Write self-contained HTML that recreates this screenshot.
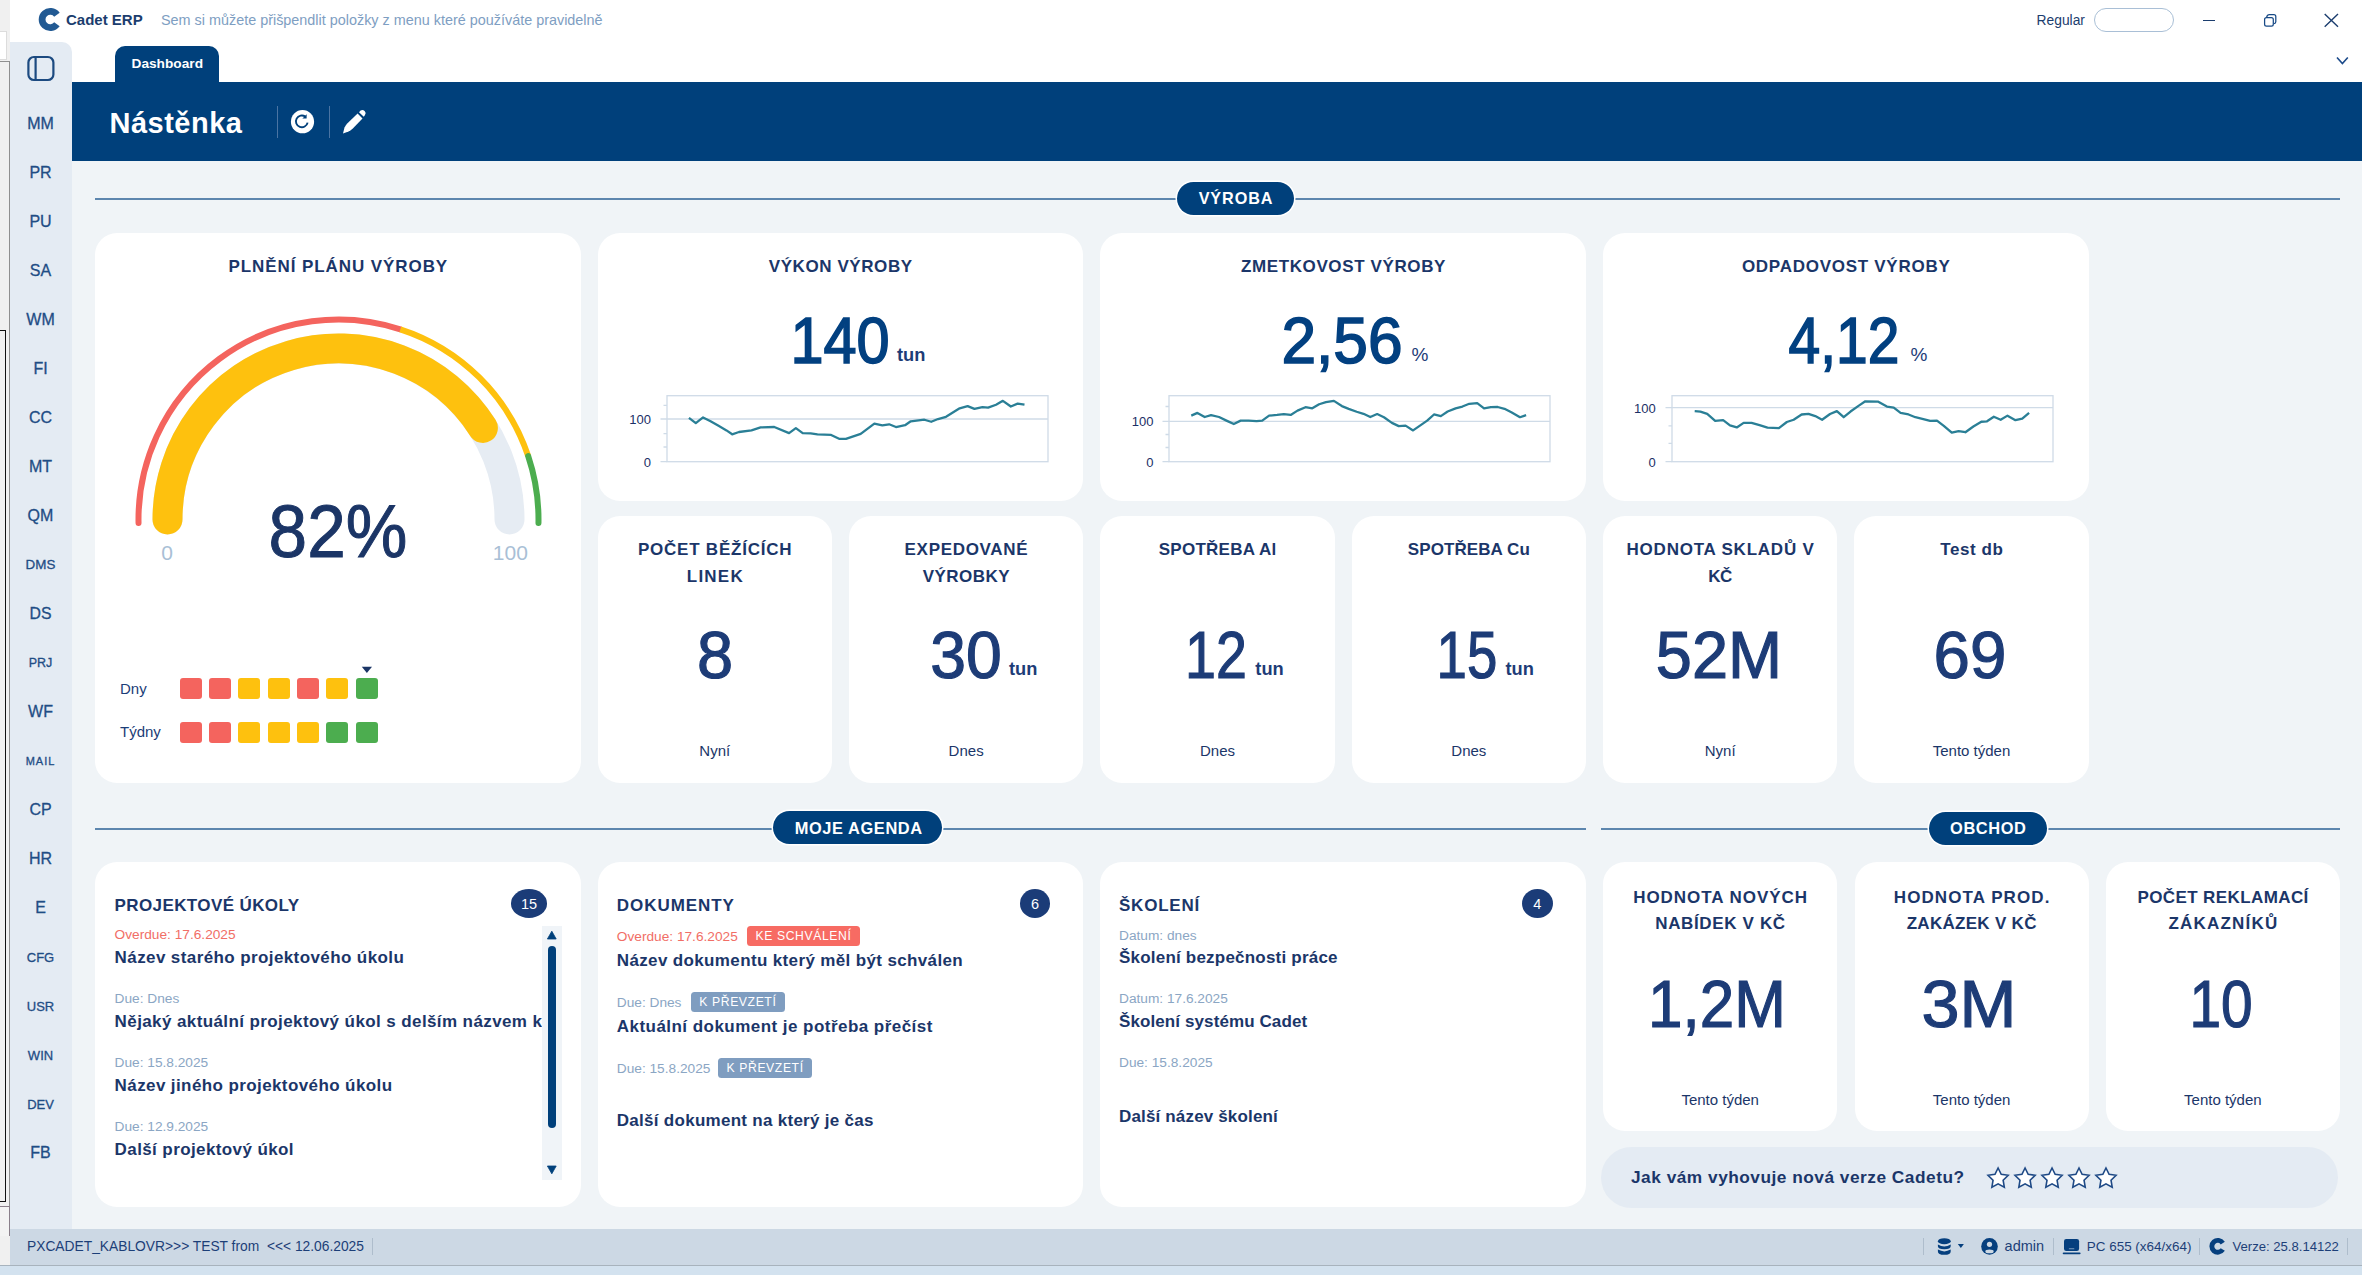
<!DOCTYPE html>
<html><head><meta charset="utf-8">
<style>
html,body{margin:0;padding:0;}
body{width:2362px;height:1275px;position:relative;overflow:hidden;font-family:"Liberation Sans",sans-serif;}
.t{position:absolute;white-space:nowrap;line-height:1;}
.r{position:absolute;}
</style></head><body>
<div class="r" style="left:0.00px;top:0.00px;width:2362.00px;height:1275.00px;background:#f0f4f7;"></div>
<div class="r" style="left:0.00px;top:0.00px;width:2362.00px;height:83.00px;background:#ffffff;"></div>
<div class="r" style="left:0.00px;top:0.00px;width:10.00px;height:1275.00px;background:#f0f0f0;"></div>
<div class="r" style="left:0.00px;top:31.00px;width:6.00px;height:27.00px;background:#ffffff;border:1px solid #dcdcdc;border-left:none;"></div>
<div class="r" style="left:0.00px;top:61.00px;width:9.00px;height:1175.00px;background:#f0f0f0;border-right:1px solid #8f8f8f;border-top:1px solid #8f8f8f;"></div>
<div class="r" style="left:0.00px;top:330.00px;width:4.50px;height:870.00px;background:transparent;border-right:1.5px solid #111;border-top:1.5px solid #111;border-bottom:1.5px solid #111;"></div>
<div class="r" style="left:0.00px;top:1206.00px;width:8.50px;height:29.00px;background:#f3f3f3;border-right:1px solid #8a7f8a;border-bottom:1px solid #8a7f8a;border-top:1px solid #8a7f8a;"></div>
<div class="r" style="left:0.00px;top:1236.00px;width:10.00px;height:30.00px;background:#f0f0f0;"></div>
<div class="r" style="left:10.00px;top:42.00px;width:61.80px;height:1187.00px;background:#e4ebf3;border-top-right-radius:10px;"></div>
<div class="r" style="left:72.00px;top:82.40px;width:2290.00px;height:78.30px;background:#00407b;"></div>
<div class="r" style="left:115.00px;top:46.00px;width:104.00px;height:40.00px;background:#00407b;border-radius:10px 10px 0 0;"></div>
<div class="t" style="left:131.50px;top:57.40px;font-size:13.7px;color:#ffffff;font-weight:700;">Dashboard</div>
<div class="t" style="left:109.50px;top:108.75px;font-size:29px;color:#ffffff;font-weight:700;letter-spacing:0.5px;">Nástěnka</div>
<div class="r" style="left:277.00px;top:106.00px;width:1.20px;height:32.00px;background:#4a74a3;"></div>
<div class="r" style="left:329.00px;top:106.00px;width:1.20px;height:32.00px;background:#4a74a3;"></div>
<svg class="r" style="left:0px;top:0px" width="70" height="40" viewBox="0 0 70 40"><path d="M56.93 14.68 A8.2 8.2 0 1 0 56.93 24.32" fill="none" stroke="#225a93" stroke-width="6.8"/></svg>
<div class="t" style="left:66.00px;top:12.30px;font-size:15px;color:#1b3d6e;font-weight:700;">Cadet ERP</div>
<div class="t" style="left:161.00px;top:12.81px;font-size:14.4px;color:#7e9ec2;font-weight:400;">Sem si můžete přišpendlit položky z menu které používáte pravidelně</div>
<div class="t" style="left:2036.60px;top:13.82px;font-size:13.8px;color:#1b3d6e;font-weight:400;">Regular</div>
<div class="r" style="left:2094.00px;top:8.00px;width:80.00px;height:24.00px;background:transparent;border:1.5px solid #a9bfd6;border-radius:13px;box-sizing:border-box;"></div>
<div class="r" style="left:2202.50px;top:20.30px;width:12.50px;height:1.20px;background:#1b3d6e;"></div>
<svg class="r" style="left:2255px;top:8px" width="30" height="24" viewBox="2255 8 30 24"><rect x="2264.6" y="17.6" width="8.7" height="8.5" rx="1.9" fill="none" stroke="#184a86" stroke-width="1.25"/><path d="M2266.6 17.3 Q2267.2 14.6 2269.4 14.6 H2273.9 Q2275.8 14.6 2275.8 16.5 V21.7 Q2275.8 23.5 2273.9 23.7" fill="none" stroke="#184a86" stroke-width="1.25"/></svg>
<svg class="r" style="left:2322px;top:12px" width="18" height="17" viewBox="0 0 18 17">
<path d="M2.7 2 L16 14.7 M16 2 L2.7 14.7" stroke="#1b3d6e" stroke-width="1.4"/>
</svg>
<svg class="r" style="left:2335px;top:55px" width="15" height="11" viewBox="0 0 15 11">
<path d="M2 2.5 L7.4 8.5 L12.8 2.5" fill="none" stroke="#1b4a8a" stroke-width="1.6"/>
</svg>
<svg class="r" style="left:289px;top:108px" width="27" height="27" viewBox="0 0 27 27">
<circle cx="13.5" cy="13.7" r="11.6" fill="#fff"/>
<path d="M18.6 14.6 A5.9 5.9 0 1 1 16.3 8.6" fill="none" stroke="#00407b" stroke-width="1.9"/>
<path d="M17.7 6.2 L17.6 10.6 L13.4 10.4 Z" fill="#00407b"/>
</svg>
<svg class="r" style="left:340px;top:108px" width="28" height="28" viewBox="0 0 28 28">
<path d="M3 25.5 L4.5 19.5 Q5.5 17.2 7.5 15.2 L17.6 5.6 L22.5 10.5 L12.8 20.4 Q10.8 22.4 8.5 23.6 Z" fill="#fff"/>
<path d="M19 4.2 L20.6 2.6 Q22.6 1 24.6 3 Q26.6 5 25 7 L23.8 8.7 Z" fill="#fff"/>
</svg>
<svg class="r" style="left:26px;top:55px" width="29" height="27" viewBox="0 0 29 27">
<rect x="2.4" y="2" width="25" height="23" rx="5.5" fill="none" stroke="#1c4a80" stroke-width="2.2"/>
<path d="M9.6 2 V25" stroke="#1c4a80" stroke-width="2.2"/>
</svg>
<div class="t" style="left:10.50px;width:60px;text-align:center;top:115.96px;font-size:16px;color:#1f4d85;font-weight:400;-webkit-text-stroke:0.3px #1f4d85;">MM</div>
<div class="t" style="left:10.50px;width:60px;text-align:center;top:164.96px;font-size:16px;color:#1f4d85;font-weight:400;-webkit-text-stroke:0.3px #1f4d85;">PR</div>
<div class="t" style="left:10.50px;width:60px;text-align:center;top:213.96px;font-size:16px;color:#1f4d85;font-weight:400;-webkit-text-stroke:0.3px #1f4d85;">PU</div>
<div class="t" style="left:10.50px;width:60px;text-align:center;top:262.96px;font-size:16px;color:#1f4d85;font-weight:400;-webkit-text-stroke:0.3px #1f4d85;">SA</div>
<div class="t" style="left:10.50px;width:60px;text-align:center;top:311.96px;font-size:16px;color:#1f4d85;font-weight:400;-webkit-text-stroke:0.3px #1f4d85;">WM</div>
<div class="t" style="left:10.50px;width:60px;text-align:center;top:360.96px;font-size:16px;color:#1f4d85;font-weight:400;-webkit-text-stroke:0.3px #1f4d85;">FI</div>
<div class="t" style="left:10.50px;width:60px;text-align:center;top:409.96px;font-size:16px;color:#1f4d85;font-weight:400;-webkit-text-stroke:0.3px #1f4d85;">CC</div>
<div class="t" style="left:10.50px;width:60px;text-align:center;top:458.96px;font-size:16px;color:#1f4d85;font-weight:400;-webkit-text-stroke:0.3px #1f4d85;">MT</div>
<div class="t" style="left:10.50px;width:60px;text-align:center;top:507.96px;font-size:16px;color:#1f4d85;font-weight:400;-webkit-text-stroke:0.3px #1f4d85;">QM</div>
<div class="t" style="left:10.50px;width:60px;text-align:center;top:558.16px;font-size:13.4px;color:#1f4d85;font-weight:400;-webkit-text-stroke:0.3px #1f4d85;">DMS</div>
<div class="t" style="left:10.50px;width:60px;text-align:center;top:606.13px;font-size:15.8px;color:#1f4d85;font-weight:400;-webkit-text-stroke:0.3px #1f4d85;">DS</div>
<div class="t" style="left:10.50px;width:60px;text-align:center;top:656.92px;font-size:12.5px;color:#1f4d85;font-weight:400;-webkit-text-stroke:0.3px #1f4d85;">PRJ</div>
<div class="t" style="left:10.50px;width:60px;text-align:center;top:703.96px;font-size:16px;color:#1f4d85;font-weight:400;-webkit-text-stroke:0.3px #1f4d85;">WF</div>
<div class="t" style="left:10.50px;width:60px;text-align:center;top:756.19px;font-size:11px;color:#1f4d85;font-weight:400;letter-spacing:1px;-webkit-text-stroke:0.3px #1f4d85;">MAIL</div>
<div class="t" style="left:10.50px;width:60px;text-align:center;top:801.96px;font-size:16px;color:#1f4d85;font-weight:400;-webkit-text-stroke:0.3px #1f4d85;">CP</div>
<div class="t" style="left:10.50px;width:60px;text-align:center;top:850.96px;font-size:16px;color:#1f4d85;font-weight:400;-webkit-text-stroke:0.3px #1f4d85;">HR</div>
<div class="t" style="left:10.50px;width:60px;text-align:center;top:899.96px;font-size:16px;color:#1f4d85;font-weight:400;-webkit-text-stroke:0.3px #1f4d85;">E</div>
<div class="t" style="left:10.50px;width:60px;text-align:center;top:950.50px;font-size:13px;color:#1f4d85;font-weight:400;-webkit-text-stroke:0.3px #1f4d85;">CFG</div>
<div class="t" style="left:10.50px;width:60px;text-align:center;top:999.50px;font-size:13px;color:#1f4d85;font-weight:400;-webkit-text-stroke:0.3px #1f4d85;">USR</div>
<div class="t" style="left:10.50px;width:60px;text-align:center;top:1048.50px;font-size:13px;color:#1f4d85;font-weight:400;-webkit-text-stroke:0.3px #1f4d85;">WIN</div>
<div class="t" style="left:10.50px;width:60px;text-align:center;top:1097.50px;font-size:13px;color:#1f4d85;font-weight:400;-webkit-text-stroke:0.3px #1f4d85;">DEV</div>
<div class="t" style="left:10.50px;width:60px;text-align:center;top:1144.96px;font-size:16px;color:#1f4d85;font-weight:400;-webkit-text-stroke:0.3px #1f4d85;">FB</div>
<div class="r" style="left:95.00px;top:197.80px;width:2245.00px;height:2.20px;background:#5d86ae;"></div>
<div class="r" style="left:1177.10px;top:181.70px;width:116.60px;height:33.10px;background:#00407b;border-radius:17px;box-shadow:0 0 0 1.5px #fff;"></div>
<div class="t" style="left:1178.00px;width:116px;text-align:center;top:190.19px;font-size:16.2px;color:#fff;font-weight:700;letter-spacing:0.9px;">VÝROBA</div>
<div class="r" style="left:95.00px;top:827.80px;width:1491.00px;height:2.20px;background:#5d86ae;"></div>
<div class="r" style="left:773.10px;top:811.40px;width:168.90px;height:33.10px;background:#00407b;border-radius:17px;box-shadow:0 0 0 1.5px #fff;"></div>
<div class="t" style="left:774.70px;width:168px;text-align:center;top:820.22px;font-size:16.4px;color:#fff;font-weight:700;letter-spacing:0.6px;">MOJE AGENDA</div>
<div class="r" style="left:1601.40px;top:827.80px;width:738.60px;height:2.20px;background:#5d86ae;"></div>
<div class="r" style="left:1928.60px;top:811.50px;width:118.60px;height:33.00px;background:#00407b;border-radius:17px;box-shadow:0 0 0 1.5px #fff;"></div>
<div class="t" style="left:1929.30px;width:118px;text-align:center;top:820.22px;font-size:16.4px;color:#fff;font-weight:700;letter-spacing:0.6px;">OBCHOD</div>
<div class="r" style="left:95.00px;top:233.00px;width:485.50px;height:550.40px;background:#fff;border-radius:22px;"></div>
<div class="r" style="left:597.70px;top:233.00px;width:485.50px;height:268.00px;background:#fff;border-radius:22px;"></div>
<div class="r" style="left:1100.40px;top:233.00px;width:485.50px;height:268.00px;background:#fff;border-radius:22px;"></div>
<div class="r" style="left:1603.10px;top:233.00px;width:485.50px;height:268.00px;background:#fff;border-radius:22px;"></div>
<div class="r" style="left:597.70px;top:516.30px;width:234.15px;height:267.20px;background:#fff;border-radius:22px;"></div>
<div class="r" style="left:849.05px;top:516.30px;width:234.15px;height:267.20px;background:#fff;border-radius:22px;"></div>
<div class="r" style="left:1100.40px;top:516.30px;width:234.15px;height:267.20px;background:#fff;border-radius:22px;"></div>
<div class="r" style="left:1351.75px;top:516.30px;width:234.15px;height:267.20px;background:#fff;border-radius:22px;"></div>
<div class="r" style="left:1603.10px;top:516.30px;width:234.15px;height:267.20px;background:#fff;border-radius:22px;"></div>
<div class="r" style="left:1854.45px;top:516.30px;width:234.15px;height:267.20px;background:#fff;border-radius:22px;"></div>
<div class="r" style="left:95.00px;top:862.30px;width:485.50px;height:344.60px;background:#fff;border-radius:22px;"></div>
<div class="r" style="left:597.70px;top:862.30px;width:485.50px;height:344.60px;background:#fff;border-radius:22px;"></div>
<div class="r" style="left:1100.40px;top:862.30px;width:485.50px;height:344.60px;background:#fff;border-radius:22px;"></div>
<div class="r" style="left:1603.10px;top:862.30px;width:234.15px;height:268.60px;background:#fff;border-radius:22px;"></div>
<div class="r" style="left:1854.50px;top:862.30px;width:234.15px;height:268.60px;background:#fff;border-radius:22px;"></div>
<div class="r" style="left:2105.80px;top:862.30px;width:234.15px;height:268.60px;background:#fff;border-radius:22px;"></div>
<div class="r" style="left:1601.40px;top:1146.60px;width:736.60px;height:61.00px;background:#e4ebf3;border-radius:31px;"></div>
<div class="r" style="left:10.00px;top:1229.00px;width:2352.00px;height:35.50px;background:#ccd8e4;"></div>
<div class="r" style="left:0.00px;top:1264.50px;width:2362.00px;height:1.30px;background:#a8b3bd;"></div>
<div class="r" style="left:0.00px;top:1265.80px;width:2362.00px;height:10.00px;background:#d3e2ef;"></div>
<div class="t" style="left:138.31px;width:400px;text-align:center;top:257.81px;font-size:17px;color:#1b3669;font-weight:700;letter-spacing:0.92px;">PLNĚNÍ PLÁNU VÝROBY</div>
<svg class="r" style="left:100px;top:300px" width="480" height="260" viewBox="100 300 480 260"><path d="M167.50 519.50 A171 171 0 0 1 509.50 519.50" fill="none" stroke="#e6ecf3" stroke-width="30" stroke-linecap="round"/><path d="M167.50 519.50 A171 171 0 0 1 482.88 427.87" fill="none" stroke="#fec10e" stroke-width="30" stroke-linecap="round"/><path d="M138.53 522.99 A200 200 0 0 1 400.30 329.29" fill="none" stroke="#f4645e" stroke-width="6" stroke-linecap="round"/><path d="M400.30 329.29 A200 200 0 0 1 528.16 456.04" fill="none" stroke="#fec10e" stroke-width="6"/><path d="M528.16 456.04 A200 200 0 0 1 538.47 522.99" fill="none" stroke="#4cad4f" stroke-width="6" stroke-linecap="round"/></svg>
<div class="t" style="left:147.00px;width:40px;text-align:center;top:542.02px;font-size:21px;color:#a9bfd6;font-weight:400;">0</div>
<div class="t" style="left:480.40px;width:60px;text-align:center;top:542.02px;font-size:21px;color:#a9bfd6;font-weight:400;">100</div>
<div class="t" style="left:137.90px;width:400px;text-align:center;top:494.11px;font-size:75px;color:#1b3566;font-weight:400;transform:scaleX(0.9242999999999999);-webkit-text-stroke:1.0px #1b3566;">82%</div>
<div class="t" style="left:120.00px;top:680.60px;font-size:15px;color:#1b3d78;font-weight:400;">Dny</div>
<div class="t" style="left:120.00px;top:723.80px;font-size:15px;color:#1b3d78;font-weight:400;">Týdny</div>
<div class="r" style="left:179.60px;top:677.50px;width:22.00px;height:21.50px;background:#f4645e;border-radius:3px;"></div>
<div class="r" style="left:208.95px;top:677.50px;width:22.00px;height:21.50px;background:#f4645e;border-radius:3px;"></div>
<div class="r" style="left:238.30px;top:677.50px;width:22.00px;height:21.50px;background:#fec10e;border-radius:3px;"></div>
<div class="r" style="left:267.65px;top:677.50px;width:22.00px;height:21.50px;background:#fec10e;border-radius:3px;"></div>
<div class="r" style="left:297.00px;top:677.50px;width:22.00px;height:21.50px;background:#f4645e;border-radius:3px;"></div>
<div class="r" style="left:326.35px;top:677.50px;width:22.00px;height:21.50px;background:#fec10e;border-radius:3px;"></div>
<div class="r" style="left:355.70px;top:677.50px;width:22.00px;height:21.50px;background:#4cad4f;border-radius:3px;"></div>
<div class="r" style="left:179.60px;top:721.70px;width:22.00px;height:21.80px;background:#f4645e;border-radius:3px;"></div>
<div class="r" style="left:208.95px;top:721.70px;width:22.00px;height:21.80px;background:#f4645e;border-radius:3px;"></div>
<div class="r" style="left:238.30px;top:721.70px;width:22.00px;height:21.80px;background:#fec10e;border-radius:3px;"></div>
<div class="r" style="left:267.65px;top:721.70px;width:22.00px;height:21.80px;background:#fec10e;border-radius:3px;"></div>
<div class="r" style="left:297.00px;top:721.70px;width:22.00px;height:21.80px;background:#fec10e;border-radius:3px;"></div>
<div class="r" style="left:326.35px;top:721.70px;width:22.00px;height:21.80px;background:#4cad4f;border-radius:3px;"></div>
<div class="r" style="left:355.70px;top:721.70px;width:22.00px;height:21.80px;background:#4cad4f;border-radius:3px;"></div>
<svg class="r" style="left:360px;top:665px" width="14" height="10" viewBox="0 0 14 10"><path d="M1.8 1.8 H12 L6.9 8 Z" fill="#1b3566"/></svg>
<div class="t" style="left:640.74px;width:400px;text-align:center;top:258.41px;font-size:17px;color:#1b3669;font-weight:700;letter-spacing:0.58px;">VÝKON VÝROBY</div>
<div class="t" style="left:640.00px;width:400px;text-align:center;top:307.97px;font-size:65.6px;color:#024080;font-weight:400;transform:scaleX(0.90644);-webkit-text-stroke:1.6px #024080;">140</div>
<div class="t" style="left:897.00px;top:345.51px;font-size:18.3px;color:#1d3c77;font-weight:700;">tun</div>
<div class="t" style="left:1143.46px;width:400px;text-align:center;top:258.41px;font-size:17px;color:#1b3669;font-weight:700;letter-spacing:0.62px;">ZMETKOVOST VÝROBY</div>
<div class="t" style="left:1142.30px;width:400px;text-align:center;top:307.97px;font-size:65.6px;color:#024080;font-weight:400;transform:scaleX(0.9494400000000001);-webkit-text-stroke:1.6px #024080;">2,56</div>
<div class="t" style="left:1411.60px;top:344.92px;font-size:19px;color:#1d3c77;font-weight:400;">%</div>
<div class="t" style="left:1646.21px;width:400px;text-align:center;top:258.41px;font-size:17px;color:#1b3669;font-weight:700;letter-spacing:0.73px;">ODPADOVOST VÝROBY</div>
<div class="t" style="left:1643.80px;width:400px;text-align:center;top:307.97px;font-size:65.6px;color:#024080;font-weight:400;transform:scaleX(0.8677199999999999);-webkit-text-stroke:1.6px #024080;">4,12</div>
<div class="t" style="left:1910.50px;top:344.92px;font-size:19px;color:#1d3c77;font-weight:400;">%</div>
<svg class="r" style="left:617px;top:380px" width="441" height="100" viewBox="617 380 441 100"><rect x="667" y="395.7" width="381" height="66" fill="none" stroke="#cfdbe7" stroke-width="1.3"/><path d="M660.5 419.0 H1048 M660.5 461.7 H667 M663.5 405.3 H667 M663.5 433.7 H667 M663.5 447.0 H667" stroke="#cfdbe7" stroke-width="1.3"/><path d="M688.95 417.91 L695.78 423.14 L703.06 417.45 L710.56 421.32 L718.53 425.87 L726.49 430.42 L732.17 434.29 L739.00 432.01 L751.51 430.42 L760.61 427.46 L774.26 427.01 L789.04 433.15 L795.87 428.14 L802.69 433.15 L810.66 433.38 L817.48 434.29 L831.13 434.97 L839.09 438.84 L845.91 438.84 L860.70 433.83 L874.35 423.59 L882.31 425.41 L889.14 424.28 L895.96 427.01 L905.06 425.19 L910.75 421.32 L924.39 419.73 L931.22 421.77 L938.04 419.04 L946.01 416.77 L959.65 408.35 L967.62 406.08 L974.44 408.81 L982.40 407.22 L988.09 407.67 L996.05 404.71 L1002.88 400.85 L1010.84 406.53 L1017.66 403.58 L1024.49 404.71" fill="none" stroke="#2a7f96" stroke-width="2.3" stroke-linejoin="round"/></svg>
<div class="t" style="left:611.00px;width:40px;text-align:right;top:412.80px;font-size:13px;color:#1b2f66;font-weight:400;">100</div>
<div class="t" style="left:611.00px;width:40px;text-align:right;top:455.80px;font-size:13px;color:#1b2f66;font-weight:400;">0</div>
<svg class="r" style="left:1119.4px;top:380px" width="441.0" height="100" viewBox="1119.4 380 441.0 100"><rect x="1169.4" y="395.7" width="381.0" height="66" fill="none" stroke="#cfdbe7" stroke-width="1.3"/><path d="M1162.9 421.3 H1550.4 M1162.9 461.7 H1169.4 M1165.9 406.5 H1169.4 M1165.9 434.5 H1169.4 M1165.9 447.5 H1169.4" stroke="#cfdbe7" stroke-width="1.3"/><path d="M1191.67 415.63 L1197.82 412.90 L1205.10 417.00 L1211.46 415.18 L1219.43 417.00 L1227.39 420.86 L1234.21 424.05 L1241.04 420.64 L1249.00 420.64 L1256.96 421.09 L1262.65 420.64 L1269.47 415.63 L1277.43 414.95 L1284.26 414.04 L1291.08 414.95 L1297.91 410.63 L1305.87 407.22 L1312.69 408.35 L1319.52 404.26 L1326.34 402.21 L1334.30 400.85 L1342.27 406.08 L1349.09 408.81 L1357.05 411.77 L1363.88 413.81 L1370.70 417.00 L1377.53 414.04 L1384.35 417.22 L1392.31 422.91 L1399.14 426.10 L1405.96 425.64 L1413.47 430.42 L1420.75 425.41 L1427.57 420.64 L1434.39 414.49 L1441.22 416.09 L1448.04 411.54 L1456.01 408.35 L1462.83 406.53 L1469.65 403.80 L1477.62 403.12 L1484.44 408.35 L1491.26 407.22 L1498.09 406.99 L1504.91 408.81 L1511.74 412.22 L1520.38 417.22 L1526.52 415.18" fill="none" stroke="#2a7f96" stroke-width="2.3" stroke-linejoin="round"/></svg>
<div class="t" style="left:1113.40px;width:40px;text-align:right;top:415.10px;font-size:13px;color:#1b2f66;font-weight:400;">100</div>
<div class="t" style="left:1113.40px;width:40px;text-align:right;top:455.80px;font-size:13px;color:#1b2f66;font-weight:400;">0</div>
<svg class="r" style="left:1621.7px;top:380px" width="440.9999999999998" height="100" viewBox="1621.7 380 440.9999999999998 100"><rect x="1671.7" y="395.7" width="380.9999999999998" height="66" fill="none" stroke="#cfdbe7" stroke-width="1.3"/><path d="M1665.2 407.7 H2052.7 M1665.2 461.7 H1671.7 M1668.2 425.9 H1671.7 M1668.2 443.4 H1671.7" stroke="#cfdbe7" stroke-width="1.3"/><path d="M1694.40 411.08 L1700.09 411.54 L1706.92 413.81 L1714.88 420.86 L1722.84 420.18 L1729.66 425.41 L1736.49 427.46 L1743.31 422.91 L1751.27 422.91 L1759.24 425.19 L1767.20 427.69 L1778.57 428.14 L1786.53 422.00 L1793.36 419.73 L1801.32 414.49 L1808.14 413.81 L1814.97 416.09 L1821.79 419.73 L1829.75 414.04 L1836.58 411.08 L1843.40 417.22 L1850.23 411.54 L1858.19 405.85 L1865.01 401.30 L1877.53 401.53 L1886.62 406.53 L1893.45 407.67 L1900.27 412.90 L1908.23 414.49 L1915.06 417.22 L1923.02 419.04 L1929.85 420.86 L1936.67 420.64 L1943.49 425.87 L1951.46 432.69 L1958.28 431.10 L1965.10 432.24 L1973.07 426.55 L1981.03 421.77 L1986.72 421.32 L1993.54 416.77 L2000.36 419.73 L2007.19 415.63 L2015.15 420.18 L2021.97 418.59 L2028.80 412.90" fill="none" stroke="#2a7f96" stroke-width="2.3" stroke-linejoin="round"/></svg>
<div class="t" style="left:1615.70px;width:40px;text-align:right;top:401.50px;font-size:13px;color:#1b2f66;font-weight:400;">100</div>
<div class="t" style="left:1615.70px;width:40px;text-align:right;top:455.80px;font-size:13px;color:#1b2f66;font-weight:400;">0</div>
<div class="t" style="left:515.17px;width:400px;text-align:center;top:541.41px;font-size:17px;color:#1b3669;font-weight:700;letter-spacing:0.78px;">POČET BĚŽÍCÍCH</div>
<div class="t" style="left:515.39px;width:400px;text-align:center;top:568.21px;font-size:17px;color:#1b3669;font-weight:700;letter-spacing:1.22px;">LINEK</div>
<div class="t" style="left:514.80px;width:400px;text-align:center;top:621.79px;font-size:66.4px;color:#1d3c77;font-weight:400;transform:scaleX(0.9784999999999999);-webkit-text-stroke:1.2px #1d3c77;">8</div>
<div class="t" style="left:614.78px;width:200px;text-align:center;top:743.30px;font-size:15px;color:#1b3669;font-weight:400;">Nyní</div>
<div class="t" style="left:766.47px;width:400px;text-align:center;top:541.41px;font-size:17px;color:#1b3669;font-weight:700;letter-spacing:0.69px;">EXPEDOVANÉ</div>
<div class="t" style="left:766.35px;width:400px;text-align:center;top:568.21px;font-size:17px;color:#1b3669;font-weight:700;letter-spacing:0.45px;">VÝROBKY</div>
<div class="t" style="left:766.00px;width:400px;text-align:center;top:621.79px;font-size:66.4px;color:#1d3c77;font-weight:400;transform:scaleX(0.9684);-webkit-text-stroke:1.2px #1d3c77;">30</div>
<div class="t" style="left:1009.00px;top:660.01px;font-size:18.3px;color:#1d3c77;font-weight:700;">tun</div>
<div class="t" style="left:866.13px;width:200px;text-align:center;top:743.30px;font-size:15px;color:#1b3669;font-weight:400;">Dnes</div>
<div class="t" style="left:1017.61px;width:400px;text-align:center;top:541.41px;font-size:17px;color:#1b3669;font-weight:700;letter-spacing:0.26px;">SPOTŘEBA Al</div>
<div class="t" style="left:1015.50px;width:400px;text-align:center;top:621.79px;font-size:66.4px;color:#1d3c77;font-weight:400;transform:scaleX(0.8376);-webkit-text-stroke:1.2px #1d3c77;">12</div>
<div class="t" style="left:1255.30px;top:660.01px;font-size:18.3px;color:#1d3c77;font-weight:700;">tun</div>
<div class="t" style="left:1117.48px;width:200px;text-align:center;top:743.30px;font-size:15px;color:#1b3669;font-weight:400;">Dnes</div>
<div class="t" style="left:1268.86px;width:400px;text-align:center;top:541.41px;font-size:17px;color:#1b3669;font-weight:700;letter-spacing:0.07px;">SPOTŘEBA Cu</div>
<div class="t" style="left:1266.50px;width:400px;text-align:center;top:621.79px;font-size:66.4px;color:#1d3c77;font-weight:400;transform:scaleX(0.8224);-webkit-text-stroke:1.2px #1d3c77;">15</div>
<div class="t" style="left:1505.40px;top:660.01px;font-size:18.3px;color:#1d3c77;font-weight:700;">tun</div>
<div class="t" style="left:1368.83px;width:200px;text-align:center;top:743.30px;font-size:15px;color:#1b3669;font-weight:400;">Dnes</div>
<div class="t" style="left:1520.56px;width:400px;text-align:center;top:541.41px;font-size:17px;color:#1b3669;font-weight:700;letter-spacing:0.77px;">HODNOTA SKLADŮ V</div>
<div class="t" style="left:1519.92px;width:400px;text-align:center;top:568.21px;font-size:17px;color:#1b3669;font-weight:700;letter-spacing:-0.5px;">KČ</div>
<div class="t" style="left:1519.40px;width:400px;text-align:center;top:621.79px;font-size:66.4px;color:#1d3c77;font-weight:400;transform:scaleX(0.97801);-webkit-text-stroke:1.2px #1d3c77;">52M</div>
<div class="t" style="left:1620.17px;width:200px;text-align:center;top:743.30px;font-size:15px;color:#1b3669;font-weight:400;">Nyní</div>
<div class="t" style="left:1771.81px;width:400px;text-align:center;top:541.41px;font-size:17px;color:#1b3669;font-weight:700;letter-spacing:0.57px;">Test db</div>
<div class="t" style="left:1770.00px;width:400px;text-align:center;top:621.79px;font-size:66.4px;color:#1d3c77;font-weight:400;transform:scaleX(0.98532);-webkit-text-stroke:1.2px #1d3c77;">69</div>
<div class="t" style="left:1871.53px;width:200px;text-align:center;top:743.30px;font-size:15px;color:#1b3669;font-weight:400;">Tento týden</div>
<div class="t" style="left:114.60px;top:897.11px;font-size:17px;color:#1b3669;font-weight:700;letter-spacing:0.39px;">PROJEKTOVÉ ÚKOLY</div>
<div class="r" style="left:510.70px;top:888.80px;width:36.70px;height:28.80px;background:#1b3c78;border-radius:50%;"></div>
<div class="t" style="left:509.05px;width:40px;text-align:center;top:896.53px;font-size:14.5px;color:#fff;font-weight:400;">15</div>
<div class="r" style="left:100px;top:920px;width:441.8px;height:260px;overflow:hidden;">
<div class="t" style="left:14.6px;top:8.40px;font-size:13.7px;color:#f16e66;">Overdue: 17.6.2025</div>
<div class="t" style="left:14.6px;top:29.41px;font-size:17px;color:#1b3669;font-weight:700;letter-spacing:0.4px;">Název starého projektového úkolu</div>
<div class="t" style="left:14.6px;top:72.10px;font-size:13.7px;color:#8ba6c4;">Due: Dnes</div>
<div class="t" style="left:14.6px;top:93.11px;font-size:17px;color:#1b3669;font-weight:700;letter-spacing:0.4px;">Nějaký aktuální projektový úkol s delším názvem k</div>
<div class="t" style="left:14.6px;top:135.80px;font-size:13.7px;color:#8ba6c4;">Due: 15.8.2025</div>
<div class="t" style="left:14.6px;top:156.81px;font-size:17px;color:#1b3669;font-weight:700;letter-spacing:0.4px;">Název jiného projektového úkolu</div>
<div class="t" style="left:14.6px;top:199.50px;font-size:13.7px;color:#8ba6c4;">Due: 12.9.2025</div>
<div class="t" style="left:14.6px;top:220.51px;font-size:17px;color:#1b3669;font-weight:700;letter-spacing:0.4px;">Další projektový úkol</div>
</div>
<div class="r" style="left:541.80px;top:925.80px;width:20.30px;height:254.20px;background:#f0f4f8;"></div>
<div class="r" style="left:547.70px;top:946.20px;width:8.50px;height:181.50px;background:#00407b;border-radius:4.3px;"></div>
<svg class="r" style="left:544px;top:928px" width="16" height="14" viewBox="0 0 16 14"><path d="M7.8 3.2 L12.2 11 H3.4 Z" fill="#00407b" stroke="#00407b" stroke-width="0.8" stroke-linejoin="round"/></svg>
<svg class="r" style="left:544px;top:1163px" width="16" height="14" viewBox="0 0 16 14"><path d="M3.4 3 H12.2 L7.8 10.8 Z" fill="#00407b" stroke="#00407b" stroke-width="0.8" stroke-linejoin="round"/></svg>
<div class="t" style="left:616.80px;top:897.11px;font-size:17px;color:#1b3669;font-weight:700;letter-spacing:0.95px;">DOKUMENTY</div>
<div class="r" style="left:1019.80px;top:889.00px;width:30.50px;height:29.00px;background:#1b3c78;border-radius:50%;"></div>
<div class="t" style="left:1015.05px;width:40px;text-align:center;top:896.83px;font-size:14.5px;color:#fff;font-weight:400;">6</div>
<div class="t" style="left:616.80px;top:930.30px;font-size:13.7px;color:#f16e66;font-weight:400;">Overdue: 17.6.2025</div>
<div class="r" style="left:747.30px;top:925.80px;width:112.40px;height:20.30px;background:#f76b63;border-radius:3.5px;"></div>
<div class="t" style="left:733.50px;width:140px;text-align:center;top:930.27px;font-size:12.2px;color:#fff;font-weight:400;letter-spacing:0.6px;">KE SCHVÁLENÍ</div>
<div class="t" style="left:616.80px;top:952.21px;font-size:17px;color:#1b3669;font-weight:700;letter-spacing:0.36px;">Název dokumentu který měl být schválen</div>
<div class="t" style="left:616.80px;top:996.10px;font-size:13.7px;color:#8ba6c4;font-weight:400;">Due: Dnes</div>
<div class="r" style="left:690.80px;top:991.90px;width:94.10px;height:20.60px;background:#7f9dc0;border-radius:3.5px;"></div>
<div class="t" style="left:667.85px;width:140px;text-align:center;top:995.97px;font-size:12.2px;color:#fff;font-weight:400;letter-spacing:0.6px;">K PŘEVZETÍ</div>
<div class="t" style="left:616.80px;top:1018.01px;font-size:17px;color:#1b3669;font-weight:700;letter-spacing:0.46px;">Aktuální dokument je potřeba přečíst</div>
<div class="t" style="left:616.80px;top:1062.20px;font-size:13.7px;color:#8ba6c4;font-weight:400;">Due: 15.8.2025</div>
<div class="r" style="left:717.90px;top:1058.20px;width:94.40px;height:20.10px;background:#7f9dc0;border-radius:3.5px;"></div>
<div class="t" style="left:695.10px;width:140px;text-align:center;top:1062.27px;font-size:12.2px;color:#fff;font-weight:400;letter-spacing:0.6px;">K PŘEVZETÍ</div>
<div class="t" style="left:616.80px;top:1112.01px;font-size:17px;color:#1b3669;font-weight:700;letter-spacing:0.28px;">Další dokument na který je čas</div>
<div class="t" style="left:1119.00px;top:897.11px;font-size:17px;color:#1b3669;font-weight:700;letter-spacing:0.77px;">ŠKOLENÍ</div>
<div class="r" style="left:1522.00px;top:889.00px;width:30.60px;height:29.00px;background:#1b3c78;border-radius:50%;"></div>
<div class="t" style="left:1517.30px;width:40px;text-align:center;top:896.83px;font-size:14.5px;color:#fff;font-weight:400;">4</div>
<div class="t" style="left:1119.00px;top:928.90px;font-size:13.7px;color:#8ba6c4;font-weight:400;">Datum: dnes</div>
<div class="t" style="left:1119.00px;top:949.31px;font-size:17px;color:#1b3669;font-weight:700;letter-spacing:0.21px;">Školení bezpečnosti práce</div>
<div class="t" style="left:1119.00px;top:992.40px;font-size:13.7px;color:#8ba6c4;font-weight:400;">Datum: 17.6.2025</div>
<div class="t" style="left:1119.00px;top:1012.91px;font-size:17px;color:#1b3669;font-weight:700;letter-spacing:0.1px;">Školení systému Cadet</div>
<div class="t" style="left:1119.00px;top:1056.00px;font-size:13.7px;color:#8ba6c4;font-weight:400;">Due: 15.8.2025</div>
<div class="t" style="left:1119.00px;top:1107.71px;font-size:17px;color:#1b3669;font-weight:700;letter-spacing:0.16px;">Další název školení</div>
<div class="t" style="left:1520.65px;width:400px;text-align:center;top:888.61px;font-size:17px;color:#1b3669;font-weight:700;letter-spacing:0.96px;">HODNOTA NOVÝCH</div>
<div class="t" style="left:1520.50px;width:400px;text-align:center;top:915.21px;font-size:17px;color:#1b3669;font-weight:700;letter-spacing:0.65px;">NABÍDEK V KČ</div>
<div class="t" style="left:1517.30px;width:400px;text-align:center;top:971.09px;font-size:66.4px;color:#1d3c77;font-weight:400;transform:scaleX(0.933844);-webkit-text-stroke:1.2px #1d3c77;">1,2M</div>
<div class="t" style="left:1620.17px;width:200px;text-align:center;top:1092.00px;font-size:15px;color:#1b3669;font-weight:400;">Tento týden</div>
<div class="t" style="left:1772.12px;width:400px;text-align:center;top:888.61px;font-size:17px;color:#1b3669;font-weight:700;letter-spacing:1.08px;">HODNOTA PROD.</div>
<div class="t" style="left:1771.72px;width:400px;text-align:center;top:915.21px;font-size:17px;color:#1b3669;font-weight:700;letter-spacing:0.29px;">ZAKÁZEK V KČ</div>
<div class="t" style="left:1769.20px;width:400px;text-align:center;top:971.09px;font-size:66.4px;color:#1d3c77;font-weight:400;transform:scaleX(1.029655);-webkit-text-stroke:1.2px #1d3c77;">3M</div>
<div class="t" style="left:1871.58px;width:200px;text-align:center;top:1092.00px;font-size:15px;color:#1b3669;font-weight:400;">Tento týden</div>
<div class="t" style="left:2023.07px;width:400px;text-align:center;top:888.61px;font-size:17px;color:#1b3669;font-weight:700;letter-spacing:0.4px;">POČET REKLAMACÍ</div>
<div class="t" style="left:2023.47px;width:400px;text-align:center;top:915.21px;font-size:17px;color:#1b3669;font-weight:700;letter-spacing:1.19px;">ZÁKAZNÍKŮ</div>
<div class="t" style="left:2020.80px;width:400px;text-align:center;top:971.09px;font-size:66.4px;color:#1d3c77;font-weight:400;transform:scaleX(0.85557);-webkit-text-stroke:1.2px #1d3c77;">10</div>
<div class="t" style="left:2122.88px;width:200px;text-align:center;top:1092.00px;font-size:15px;color:#1b3669;font-weight:400;">Tento týden</div>
<div class="t" style="left:1631.00px;top:1169.16px;font-size:17.3px;color:#1b3669;font-weight:700;letter-spacing:0.5px;">Jak vám vyhovuje nová verze Cadetu?</div>
<svg class="r" style="left:1980px;top:1160px" width="150" height="35" viewBox="1980 1160 150 35"><path d="M1998.10 1168.00 L2001.22 1174.31 L2008.18 1175.32 L2003.14 1180.24 L2004.33 1187.18 L1998.10 1183.90 L1991.87 1187.18 L1993.06 1180.24 L1988.02 1175.32 L1994.98 1174.31 Z" fill="#fff" stroke="#1f4a86" stroke-width="1.6" stroke-linejoin="miter"/><path d="M2025.07 1168.00 L2028.19 1174.31 L2035.15 1175.32 L2030.11 1180.24 L2031.30 1187.18 L2025.07 1183.90 L2018.84 1187.18 L2020.03 1180.24 L2014.99 1175.32 L2021.95 1174.31 Z" fill="#fff" stroke="#1f4a86" stroke-width="1.6" stroke-linejoin="miter"/><path d="M2052.04 1168.00 L2055.16 1174.31 L2062.12 1175.32 L2057.08 1180.24 L2058.27 1187.18 L2052.04 1183.90 L2045.81 1187.18 L2047.00 1180.24 L2041.96 1175.32 L2048.92 1174.31 Z" fill="#fff" stroke="#1f4a86" stroke-width="1.6" stroke-linejoin="miter"/><path d="M2079.01 1168.00 L2082.13 1174.31 L2089.09 1175.32 L2084.05 1180.24 L2085.24 1187.18 L2079.01 1183.90 L2072.78 1187.18 L2073.97 1180.24 L2068.93 1175.32 L2075.89 1174.31 Z" fill="#fff" stroke="#1f4a86" stroke-width="1.6" stroke-linejoin="miter"/><path d="M2105.98 1168.00 L2109.10 1174.31 L2116.06 1175.32 L2111.02 1180.24 L2112.21 1187.18 L2105.98 1183.90 L2099.75 1187.18 L2100.94 1180.24 L2095.90 1175.32 L2102.86 1174.31 Z" fill="#fff" stroke="#1f4a86" stroke-width="1.6" stroke-linejoin="miter"/></svg>
<div class="t" style="left:27.00px;top:1239.82px;font-size:13.8px;color:#1c3f78;font-weight:400;">PXCADET_KABLOVR&gt;&gt;&gt; TEST from &nbsp;&lt;&lt;&lt; 12.06.2025</div>
<div class="r" style="left:372.00px;top:1238.00px;width:1.20px;height:17.00px;background:#aebdcc;"></div>
<div class="r" style="left:1923.00px;top:1238.00px;width:1.20px;height:17.00px;background:#aebdcc;"></div>
<div class="r" style="left:2052.50px;top:1238.00px;width:1.20px;height:17.00px;background:#aebdcc;"></div>
<div class="r" style="left:2198.60px;top:1238.00px;width:1.20px;height:17.00px;background:#aebdcc;"></div>
<div class="r" style="left:2346.50px;top:1238.00px;width:1.20px;height:17.00px;background:#aebdcc;"></div>
<div class="t" style="left:2004.60px;top:1239.03px;font-size:14.5px;color:#1c3f78;font-weight:400;">admin</div>
<div class="t" style="left:2086.80px;top:1239.91px;font-size:13.45px;color:#1c3f78;font-weight:400;">PC 655 (x64/x64)</div>
<div class="t" style="left:2232.50px;top:1240.21px;font-size:13.1px;color:#1c3f78;font-weight:400;">Verze: 25.8.14122</div>
<svg class="r" style="left:1930px;top:1234px" width="80" height="24" viewBox="1930 1234 80 24"><ellipse cx="1944.3" cy="1241.2" rx="6.4" ry="3.0" fill="#053f7e"/><path d="M1937.9 1244.6 Q1944.3 1248.4 1950.7 1244.6 V1246.2 Q1950.7 1249.2 1944.3 1249.2 Q1937.9 1249.2 1937.9 1246.2 Z" fill="#053f7e"/><path d="M1937.9 1249.6 Q1944.3 1253.2 1950.7 1249.6 V1251.4 Q1950.7 1254.8 1944.3 1254.8 Q1937.9 1254.8 1937.9 1251.4 Z" fill="#053f7e"/><path d="M1957.8 1243.9 H1963.9 L1960.85 1247.9 Z" fill="#053f7e"/><circle cx="1989.5" cy="1246.4" r="8.3" fill="#053f7e"/><circle cx="1989.5" cy="1244.3" r="2.6" fill="#cdd8e3"/><ellipse cx="1989.5" cy="1251.4" rx="4.2" ry="1.9" fill="#cdd8e3"/></svg>
<svg class="r" style="left:2055px;top:1234px" width="180" height="24" viewBox="2055 1234 180 24"><rect x="2064" y="1239.1" width="15.1" height="11.9" rx="2.2" fill="#053f7e"/><rect x="2062.7" y="1252.4" width="17.9" height="1.8" rx="0.9" fill="#053f7e"/><rect x="2068.8" y="1248.3" width="5.6" height="1.0" rx="0.5" fill="#7d9cbd"/><path d="M2222.79 1243.06 A5.95 5.95 0 1 0 2222.79 1249.54" fill="none" stroke="#053f7e" stroke-width="4.9"/></svg>
</body></html>
